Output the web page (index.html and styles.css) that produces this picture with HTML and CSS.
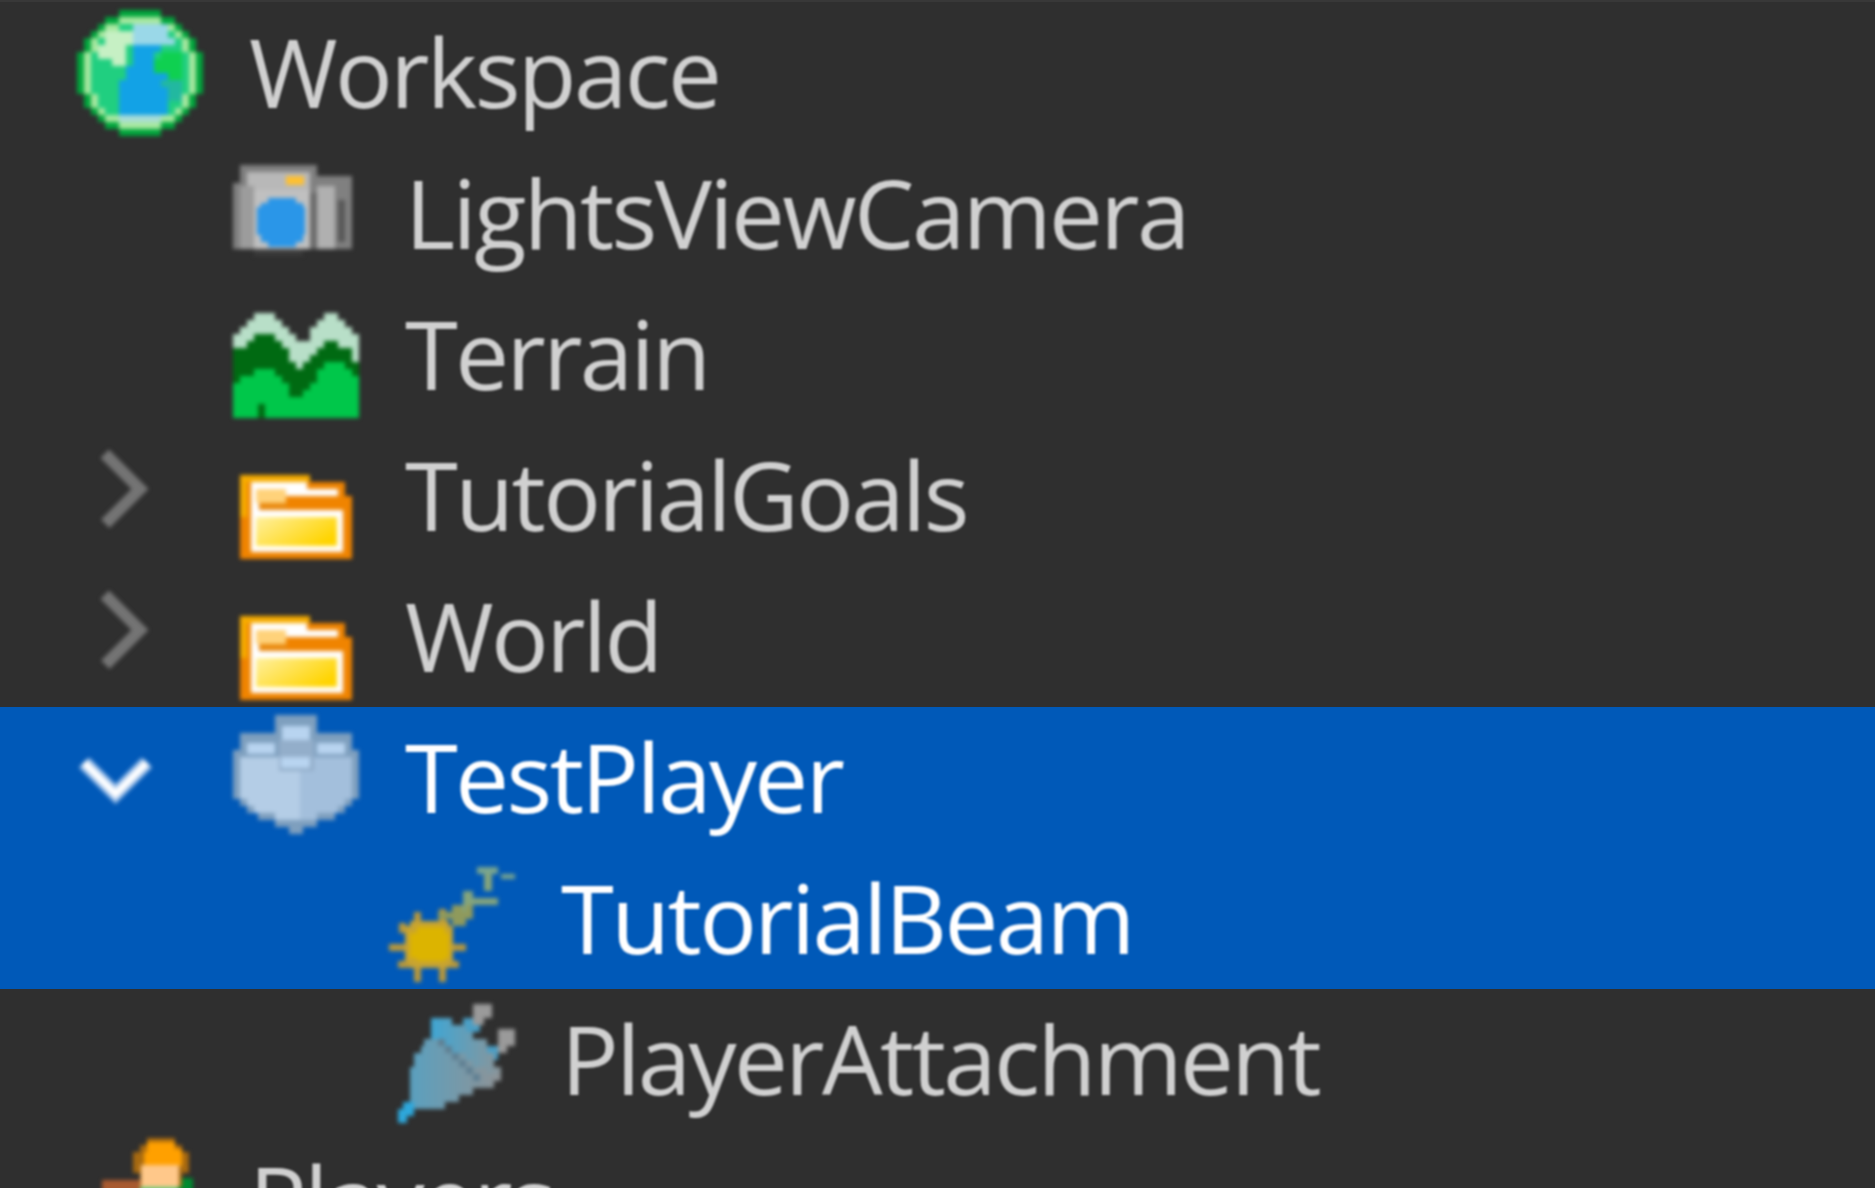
FILE: index.html
```html
<!DOCTYPE html>
<html lang="en">
<head>
  <meta charset="UTF-8">
  <title>Explorer</title>
  <link rel="stylesheet" href="styles.css">
</head>
<body>
  <svg class="defs" width="0" height="0">
    <defs>
      <linearGradient id="folderFill" x1="0" y1="0" x2="1" y2="0.6">
        <stop offset="0" stop-color="#fff0a0"/>
        <stop offset="1" stop-color="#ffd400"/>
      </linearGradient>
      <linearGradient id="plugFill" x1="0" y1="0" x2="1" y2="0">
        <stop offset="0" stop-color="#5aa0bf"/>
        <stop offset="1" stop-color="#8f9396"/>
      </linearGradient>
      <linearGradient id="bandFill" x1="0" y1="0" x2="1" y2="0">
        <stop offset="0" stop-color="#3fa6d4"/>
        <stop offset="1" stop-color="#8b9599"/>
      </linearGradient>
      <symbol id="folder" viewBox="0 0 18 18">
        <path fill="#f08400" d="M1 6H11V7H16V9H17V18H1Z"/>
        <path fill="#f7ac00" d="M1 6H11V7H2V12H1Z"/>
        <path fill="#ffffff" d="M2.5 7H10.5V8H15V9H7.5V11H15.7V17H2.5Z"/>
        <path fill="#ffd27a" d="M3.3 8H7.5V10H3.3Z"/>
        <path fill="#e98a10" d="M3.7 10H7.7V11H3.7Z"/>
        <path fill="url(#folderFill)" d="M3.3 12H14.8V16.2H3.3Z"/>
      </symbol>
      <symbol id="chevron-right" viewBox="0 0 18 18">
        <path fill="none" stroke="#747474" stroke-width="1.8" d="M4 3L9 8L4 13"/>
      </symbol>
    </defs>
  </svg>

  <div class="tree">
    <div class="row">
      <svg class="icon" viewBox="0 0 18 18">
        <path fill="#00a63c" d="M6 0H12V1H14V2H15V3H16V4H17V6H18V12H17V14H16V15H15V16H14V17H12V18H6V17H4V16H3V15H2V14H1V12H0V6H1V4H2V3H3V2H4V1H6Z"/>
        <path fill="#a8e8a0" d="M6 1H12V2H14V3H15V4H16V6H17V12H16V14H15V15H14V16H12V17H6V16H4V15H3V14H2V12H1V6H2V4H3V3H4V2H6Z"/>
        <path fill="#20cf80" d="M6 2H12V3H14V4H15V6H16V12H15V14H14V15H12V16H6V15H4V14H3V12H2V6H3V4H4V3H6Z"/>
        <path fill="#c6f0c4" d="M4 3H8V5H7V8H5V7H3V5H4Z"/>
        <path fill="#9ad8e8" d="M8 2H13V4H14V5H10V6H8Z"/>
        <path fill="#12a2e6" d="M8 5H12V6H11V9H15V11H14V13H13V15H6V10H7V8H8Z"/>
        <path fill="#0fd050" d="M11 7H12V6H15V10H13V9H11Z"/>
        <path fill="#22b8a0" d="M12 10H15V13H13V11H12Z"/>
        <path fill="#a8dcd8" d="M6 15H12V16H6Z"/>
      </svg>
      <span class="name">Workspace</span>
    </div>

    <div class="row">
      <span class="slot"></span>
      <svg class="icon" viewBox="0 0 18 18">
        <path fill="#3b3b3b" d="M3 14H10V15H3Z"/>
        <path fill="#808080" d="M1 2H12V3.5H17V14H0V4.5H1Z"/>
        <path fill="#b8b8b8" d="M2 3H11V6H2Z"/>
        <path fill="#9c9c9c" d="M1 5H3V14H1Z"/>
        <path fill="#c0c0c0" d="M3 5.5H11V14H3Z"/>
        <path fill="#ffc030" d="M7.6 3.6H10.2V4.8H7.6Z"/>
        <path fill="#2a96e8" d="M5 6.7H9V7.4H10V8H10.3V12H10V13H9V13.7H5V13H4V12H3.4V8H4V7.4H5Z"/>
        <path fill="#6a6a6a" d="M11 6H12V14H11Z"/>
        <path fill="#b0b0b0" d="M12 5H14.5V14H12Z"/>
        <path fill="#585858" d="M15 7H16V13H15Z"/>
      </svg>
      <span class="name">LightsViewCamera</span>
    </div>

    <div class="row">
      <span class="slot"></span>
      <svg class="icon" viewBox="0 0 18 18">
        <path fill="#b8dfc8" d="M0 18V6H1V5H2V4H3V3H6V4H7V5H8V6H9V7H11V5H12V4H13V3H15V4H16V5H17V6H18V18Z"/>
        <path fill="#006a12" d="M0 18V8H2V7H3V6H6V7H7V8H8V10H9V11H10V10H11V9H12V8H13V7H15V8H17V10H18V18Z"/>
        <path fill="#00c74a" d="M0 18V13H1V12H3V11H6V12H7V13H8V15H10V14H11V13H12V11H13V10H16V11H17V12H18V18Z"/>
        <path fill="#006a12" d="M3.5 16H4.5V18H3.5Z"/>
      </svg>
      <span class="name">Terrain</span>
    </div>

    <div class="row">
      <span class="slot"><svg class="icon"><use href="#chevron-right"/></svg></span>
      <svg class="icon"><use href="#folder"/></svg>
      <span class="name">TutorialGoals</span>
    </div>

    <div class="row">
      <span class="slot"><svg class="icon"><use href="#chevron-right"/></svg></span>
      <svg class="icon"><use href="#folder"/></svg>
      <span class="name">World</span>
    </div>

    <div class="row selected">
      <span class="slot">
        <svg class="icon" viewBox="0 0 18 18">
          <path fill="none" stroke="#9cc0ea" stroke-width="2" d="M1 6.8L5.5 11.3L10 6.8"/>
          <path fill="none" stroke="#ffffff" stroke-width="1" d="M1 6.8L5.5 11.3L10 6.8"/>
        </svg>
      </span>
      <svg class="icon" viewBox="0 0 18 18">
        <path fill="#7e9fbe" d="M6 0H12V2.5H17V5H18V12H17V13H16V14H14.5V15H12V16H10V17H8V16H6V15H3.5V14H2V13H1V12H0V5H1V2.5H6Z"/>
        <path fill="#b4cde6" d="M1 6H9.5V15H6V14H3V13H2V12H1Z"/>
        <path fill="#a3bfdc" d="M9.5 6H17V12H16V13H15V14H12V15H9.5Z"/>
        <path fill="#93aeca" d="M6.5 3.5H11.5V8H6.5Z"/>
        <path fill="#b8d4f0" d="M7 1.5H11V3.5H7ZM2 4H6V5.5H2ZM12 4H16V5.5H12ZM6.8 6H11V7.5H6.8Z"/>
      </svg>
      <span class="name">TestPlayer</span>
    </div>

    <div class="row selected">
      <span class="slot"></span>
      <span class="slot"></span>
      <svg class="icon" viewBox="0 0 18 18">
        <path fill="#b8983a" d="M0 12.5H11V13.5H0ZM3.5 8H4.5V18H3.5ZM7.2 7.5H8.2V18H7.2ZM1.3 15H10V16H1.3ZM1.4 9.5H2.4V11H1.4Z"/>
        <path fill="#c8a430" d="M3 9.3H8.5V10H9.2V15.3H8.5V16H3V15.3H2.3V10H3Z"/>
        <path fill="#dcb400" d="M4 10.2H8V11H8.5V14.5H8V15H4V14.5H3V11H4Z"/>
        <path fill="#8f9a5c" d="M7 8H9V7H12V9H11V10H9V9H7Z"/>
        <path fill="#85a57c" d="M10.5 5H12V6H15.5V7H11V8H10.5ZM13.5 2H14.7V5H13.5Z"/>
        <path fill="#7aa68e" d="M12.5 1.5H15.5V2.5H12.5ZM16 2.6H18V3.3H16Z"/>
      </svg>
      <span class="name">TutorialBeam</span>
    </div>

    <div class="row">
      <span class="slot"></span>
      <span class="slot"></span>
      <svg class="icon" viewBox="0 0 18 18">
        <path fill="#9a9a9a" d="M12 1H14.7V3H13.5V4H12ZM15.6 4.6H18V7H16.8V8H15.6Z"/>
        <path fill="#4a9fc6" d="M10.5 3H12V4H13V5H12V6H10.5ZM14 7H15.5V9H14Z"/>
        <path fill="url(#plugFill)" d="M5 6H7V7H9V8H11V9H12V10H14V11H16V12H15V13H12V14H10V15H8V16H3V15H3V10H3.5V8H4.5V7H5Z"/>
        <path fill="url(#bandFill)" d="M6 3H9V4H11V5H12V6H14V8H15V10H16V11H14V10H12V9H11V8H9V7H7V6H6Z"/>
        <path fill="#5f7f92" d="M7 6H8V7H9V8H10V9H11V10H12V11H13V12H12V11H11V10H10V9H9V8H8V7H7Z"/>
        <path fill="#2ea8dc" d="M2 15H3.5V17H2.5V18H1.3V16H2Z"/>
      </svg>
      <span class="name">PlayerAttachment</span>
    </div>

    <div class="row">
      <svg class="icon" viewBox="0 0 18 18">
        <path fill="#a85a30" d="M3.6 6H9V18H3.6Z"/>
        <path fill="#5fc878" d="M9 7H15V18H9Z"/>
        <path fill="#008a30" d="M14.4 5.7H16.6V18H14.4Z"/>
        <path fill="#a86a10" d="M10 0H14V1H15V2H16V5H15V7H9V5H8V2H9V1H10Z"/>
        <path fill="#ffa000" d="M10 0.5H14V1.5H15V4H14V3.8H9.5V2H10Z"/>
        <path fill="#ffc88a" d="M9.2 3.8H14.5V7H9.2Z"/>
      </svg>
      <span class="name">Players</span>
    </div>
  </div>
</body>
</html>
```

FILE: styles.css
```css
body {
  margin: 0;
  height: 1188px;
  overflow: hidden;
  background-color: #2f2f2f;
  font-family: "Open Sans", sans-serif;
}
.defs {
  position: absolute;
}
.tree {
  border-top: 2px solid #383838;
}
.row {
  display: flex;
  align-items: center;
  height: 141px;
  padding-left: 77px;
  color: #d0d0d0;
  font-size: 96px;
  font-stretch: 88%;
  letter-spacing: -2.6px;
}
.selected {
  background-color: #0059b8;
  color: #ffffff;
}
.slot {
  display: flex;
  flex: none;
  width: 156px;
}
.icon {
  flex: none;
  width: 126px;
  height: 126px;
  shape-rendering: crispEdges;
  filter: blur(2px);
}
.name {
  margin-left: 46px;
  margin-bottom: 4px;
  filter: blur(1px);
}
```
